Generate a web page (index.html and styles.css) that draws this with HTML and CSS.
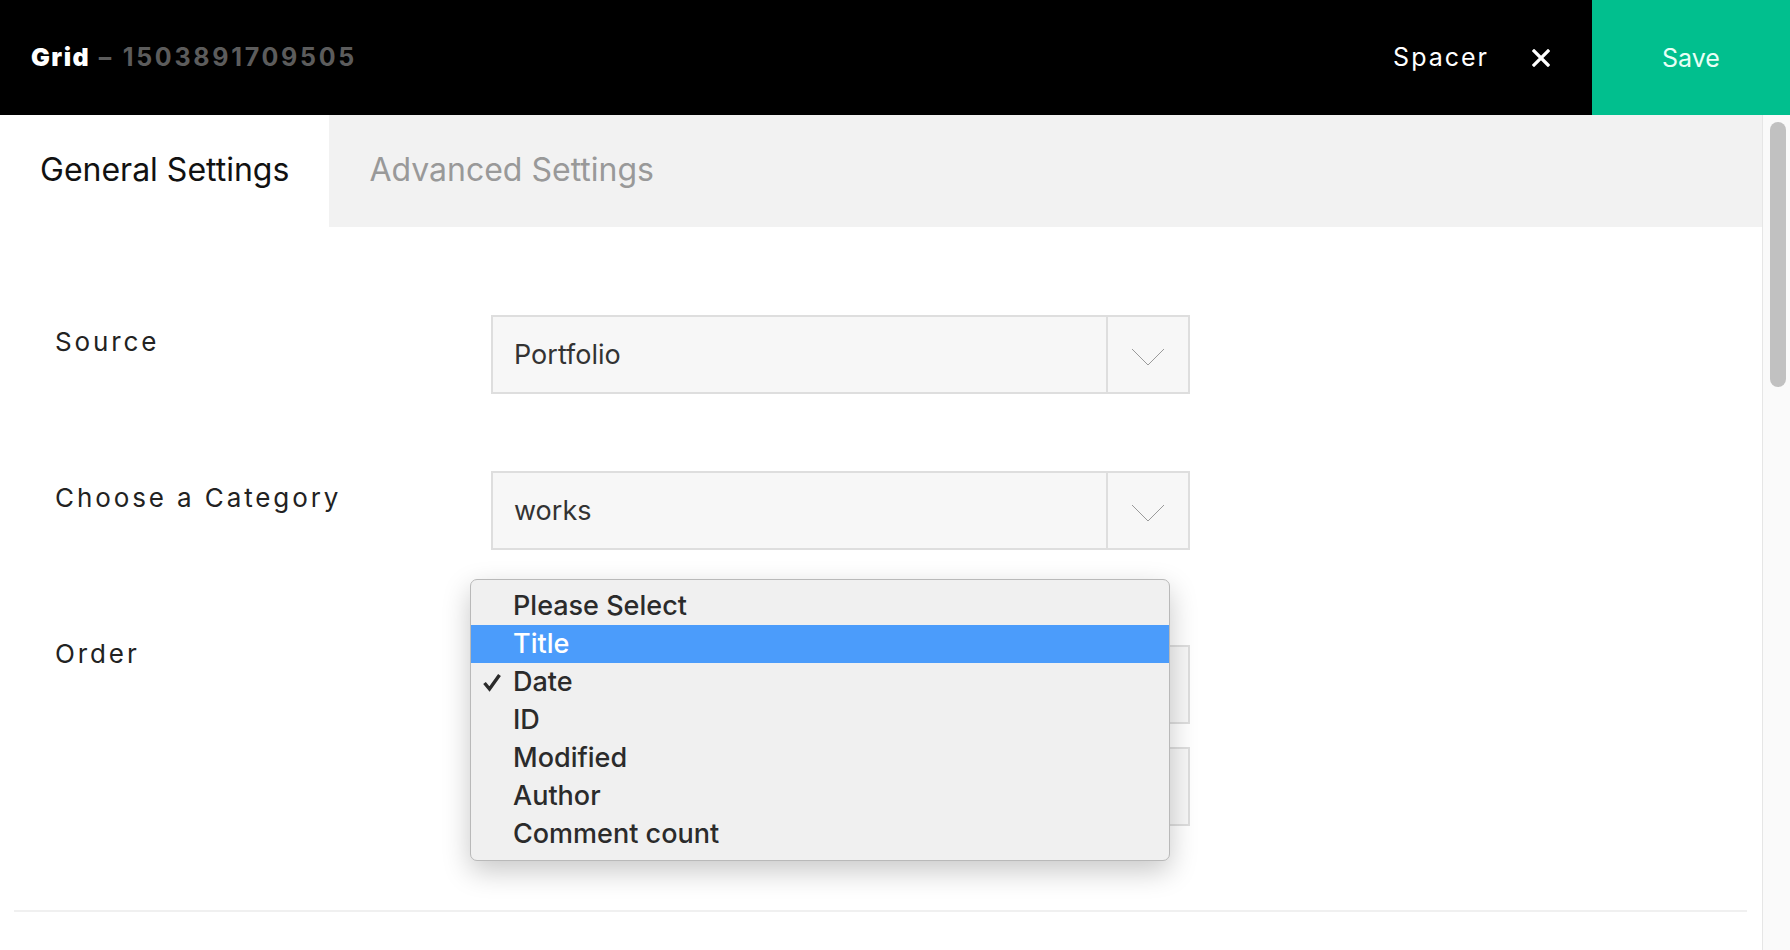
FILE: index.html
```html
<!DOCTYPE html>
<html lang="en">
<head>
    <meta charset="UTF-8">
    <meta name="viewport" content="width=device-width, initial-scale=1.0">
    <title>Grid – Settings</title>
    <link rel="stylesheet" href="styles.css">
</head>
<body>

<header class="topbar">
    <div class="title"><strong>Grid</strong><span class="addon-id"> – 1503891709505</span></div>
    <div class="actions">
        <span class="addon-name">Spacer</span>
        <button class="close-btn" aria-label="Close">
            <svg width="18" height="18" viewBox="0 0 18 18">
                <path d="M2 2 L16 16 M16 2 L2 16" stroke="#fff" stroke-width="3.2" stroke-linecap="square"/>
            </svg>
        </button>
        <button class="save-btn">Save</button>
    </div>
</header>

<div class="workspace">
    <div class="panel">
        <nav class="tabs">
            <a class="tab active">General Settings</a>
            <a class="tab">Advanced Settings</a>
        </nav>

        <div class="settings">
            <div class="row">
                <label class="label">Source</label>
                <div class="field">
                    <div class="select">
                        <span class="value">Portfolio</span>
                        <span class="arrow"><svg width="34" height="18" viewBox="0 0 34 18"><polyline points="1,1 17,17 33,1" fill="none" stroke="#9a9a9a" stroke-width="1"/></svg></span>
                    </div>
                </div>
            </div>

            <div class="row">
                <label class="label">Choose a Category</label>
                <div class="field">
                    <div class="select">
                        <span class="value">works</span>
                        <span class="arrow"><svg width="34" height="18" viewBox="0 0 34 18"><polyline points="1,1 17,17 33,1" fill="none" stroke="#9a9a9a" stroke-width="1"/></svg></span>
                    </div>
                </div>
            </div>

            <div class="row">
                <label class="label">Order</label>
                <!-- les deux selects sont cachés par le menu ouvert -->
                <div class="field field-order">
                    <div class="select">
                        <span class="value"></span>
                        <span class="arrow"><svg width="34" height="18" viewBox="0 0 34 18"><polyline points="1,1 17,17 33,1" fill="none" stroke="#9a9a9a" stroke-width="1"/></svg></span>
                    </div>
                    <div class="select">
                        <span class="value"></span>
                        <span class="arrow"><svg width="34" height="18" viewBox="0 0 34 18"><polyline points="1,1 17,17 33,1" fill="none" stroke="#9a9a9a" stroke-width="1"/></svg></span>
                    </div>
                </div>
            </div>
        </div>

        <div class="divider"></div>
    </div>

    <div class="scrollbar"><div class="thumb"></div></div>
</div>

<!-- menu natif ouvert sur le champ Order -->
<ul class="popup">
    <li>Please Select</li>
    <li class="hover">Title</li>
    <li class="checked"><svg class="check" width="20" height="20" viewBox="0 0 20 20"><path d="M2.5 11 L7.5 17 L17.5 3" fill="none" stroke="#2b2b2b" stroke-width="3.4"/></svg>Date</li>
    <li>ID</li>
    <li>Modified</li>
    <li>Author</li>
    <li>Comment count</li>
</ul>

</body>
</html>
```

FILE: styles.css
```css
body {
    margin: 0;
    width: 1790px;
    height: 950px;
    overflow: hidden;
    font-family: Inter, "Noto Sans", sans-serif;
    background-color: #fff;
    color: #222;
}
.topbar {
    height: 115px;
    background-color: #000;
    display: flex;
    align-items: center;
    justify-content: space-between;
}
.title {
    padding-left: 31px;
    padding-bottom: 2px;
    font-size: 25px;
    font-weight: 700;
    color: #fff;
    letter-spacing: 1.5px;
}
.addon-id {
    color: #5c5c5c;
    letter-spacing: 2.7px;
}
.actions {
    display: flex;
    align-items: center;
    height: 100%;
}
.addon-name {
    color: #fff;
    font-size: 25px;
    letter-spacing: 2px;
    padding-bottom: 2px;
}
.close-btn {
    background: none;
    border: none;
    padding: 0;
    margin-left: 43px;
    margin-right: 42px;
    width: 18px;
    height: 18px;
    display: flex;
    cursor: pointer;
}
.save-btn {
    width: 198px;
    height: 100%;
    border: none;
    background-color: #01bf8e;
    color: #e8fff6;
    font-family: inherit;
    font-size: 25px;
    cursor: pointer;
}
.workspace {
    display: flex;
    height: 835px;
}
.panel {
    flex: 1;
}
.tabs {
    display: flex;
    height: 112px;
    background-color: #f2f2f2;
}
.tab {
    display: flex;
    align-items: center;
    padding: 0 40px 4px;
    font-size: 32px;
    color: #999;
}
.tab.active {
    background-color: #fff;
    color: #111;
}
.settings {
    padding: 88px 0 7px 55px;
}
.row {
    display: flex;
    margin-bottom: 77px;
}
.label {
    width: 436px;
    padding-top: 11px;
    font-size: 26px;
    line-height: 31px;
    letter-spacing: 2.9px;
    color: #222;
}
.field {
    width: 699px;
}
.field-order {
    padding-top: 18px;
    display: flex;
    flex-direction: column;
    gap: 23px;
}
.select {
    display: flex;
    height: 75px;
    border: 2px solid #dedede;
    background-color: #f7f7f7;
}
.value {
    flex: 1;
    display: flex;
    align-items: center;
    padding-left: 21px;
    font-size: 27px;
    color: #333;
}
.arrow {
    width: 80px;
    border-left: 2px solid #dedede;
    display: flex;
    align-items: center;
    justify-content: center;
    padding-top: 4px;
}
.divider {
    margin: 0 15px 0 14px;
    border-top: 2px solid #f0f0f0;
}
.scrollbar {
    width: 27px;
    border-left: 1px solid #e6e6e6;
    background-color: #fafafa;
    padding-top: 7px;
}
.thumb {
    width: 16px;
    height: 265px;
    margin-left: 7px;
    border-radius: 8px;
    background-color: #c1c1c1;
}
.popup {
    position: absolute;
    left: 470px;
    top: 579px;
    width: 698px;
    margin: 0;
    padding: 7px 0;
    list-style: none;
    background-color: #f0f0f0;
    border: 1px solid #b9b9b9;
    border-radius: 7px;
    box-shadow: 0 10px 28px rgba(0, 0, 0, 0.22);
}
.popup li {
    position: relative;
    height: 38px;
    line-height: 38px;
    padding-left: 42px;
    font-size: 27px;
    font-weight: 500;
    color: #2b2b2b;
}
.popup li.hover {
    background-color: #4b9cfb;
    color: #fff;
}
.check {
    position: absolute;
    left: 11px;
    top: 9px;
}
```
